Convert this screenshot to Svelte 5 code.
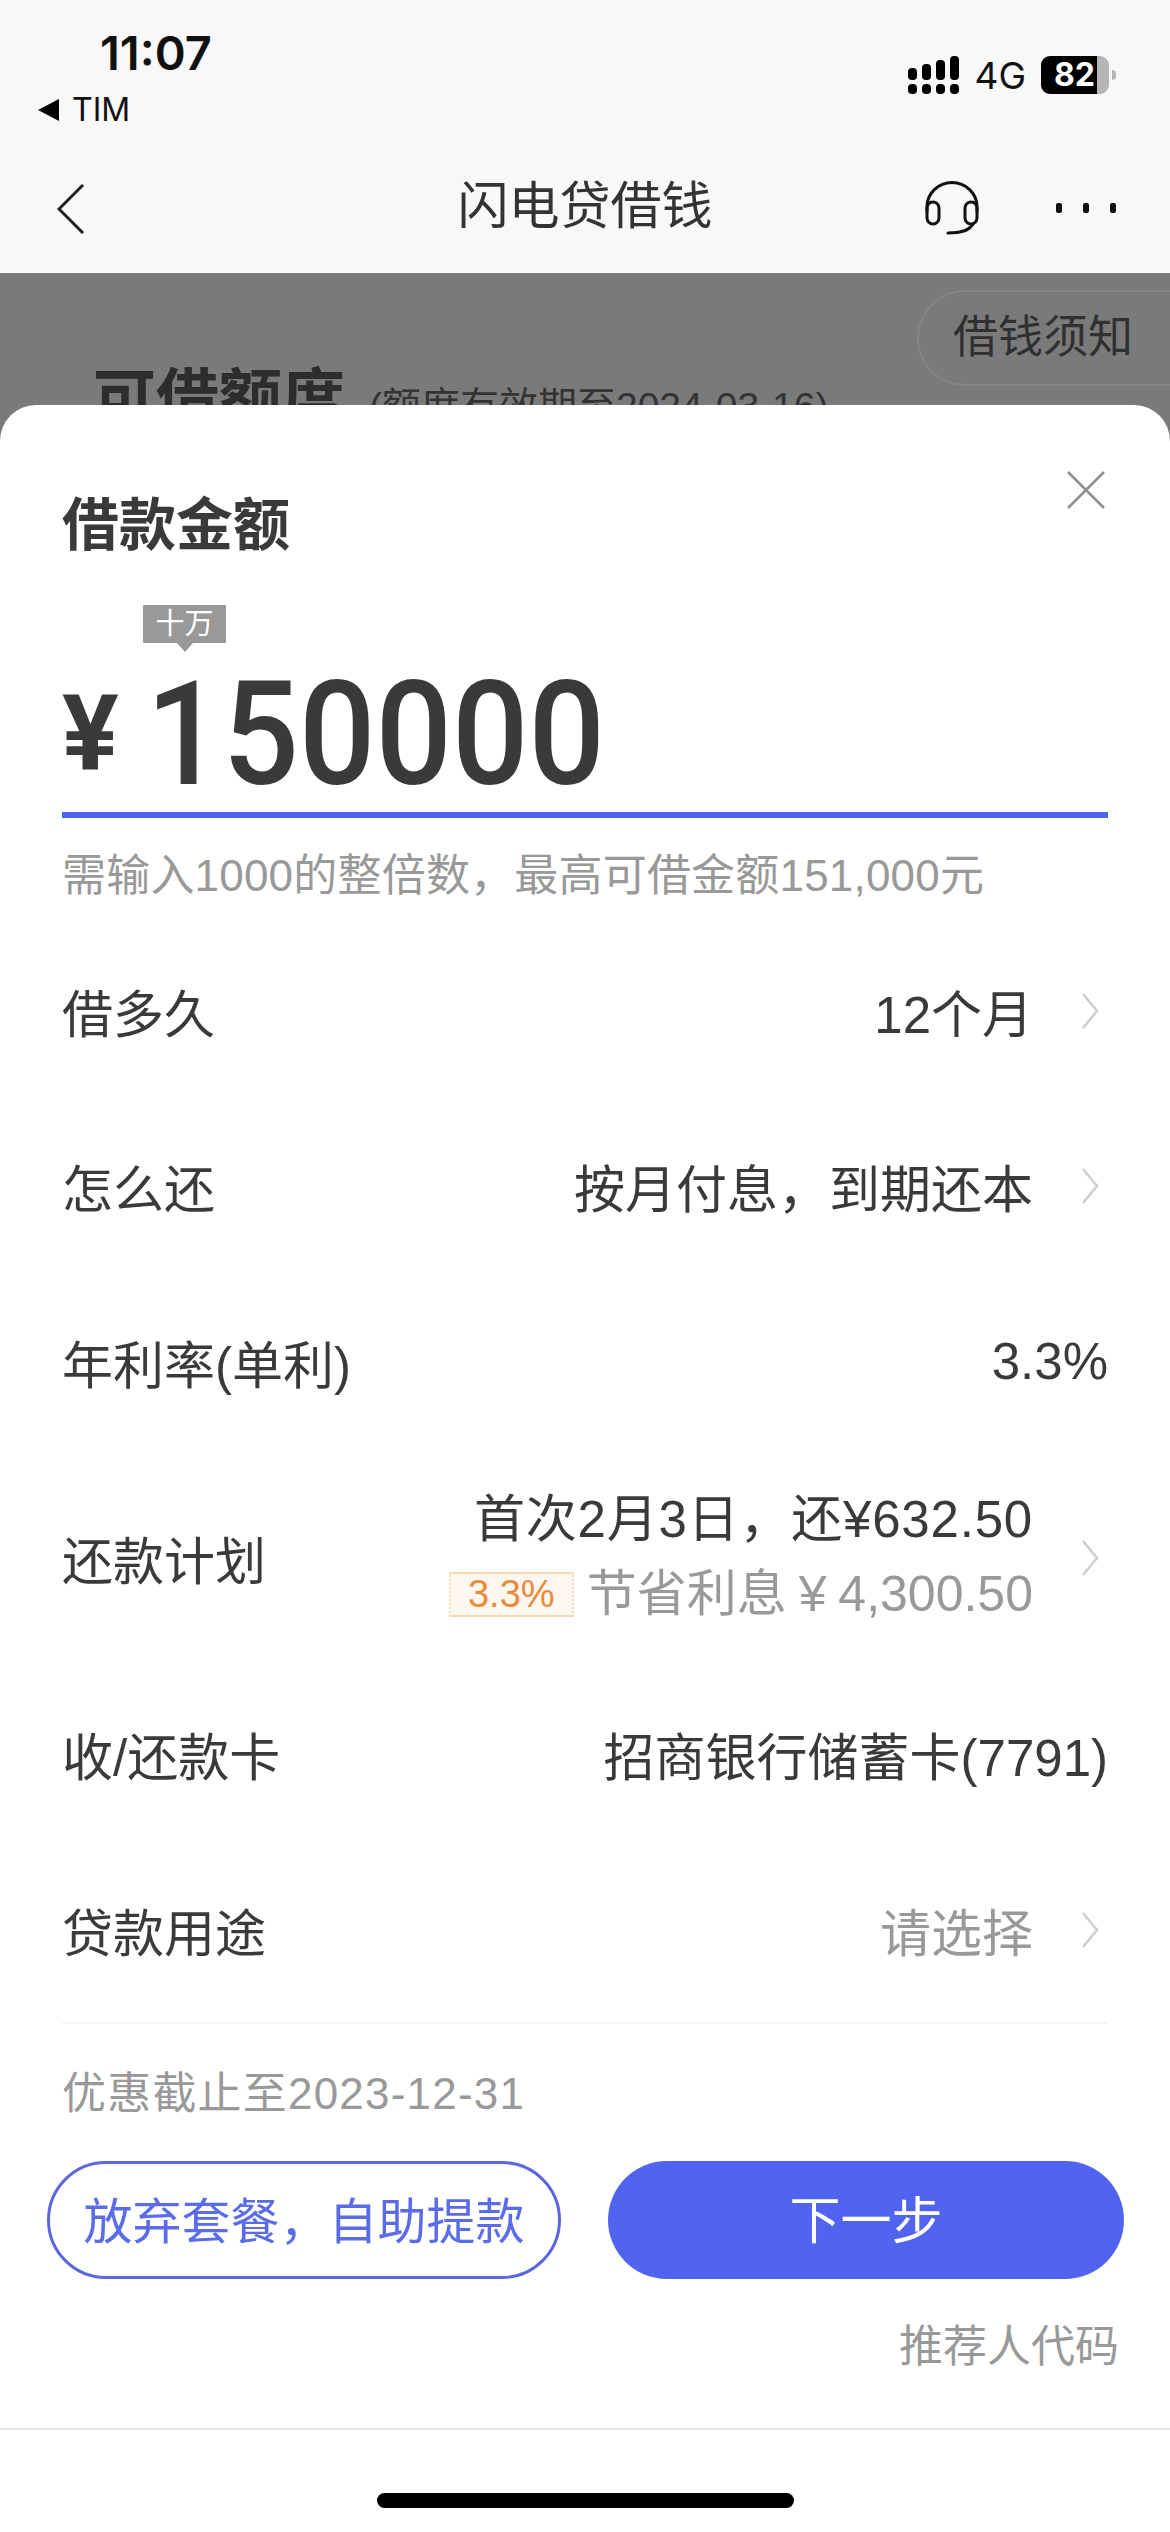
<script>
  const rows = [
    { label: '借多久', value: '12个月', arrow: true },
    { label: '怎么还', value: '按月付息，到期还本', arrow: true },
    { label: '年利率(单利)', value: '3.3%', arrow: false }
  ];
  const rowsAfter = [
    { label: '收/还款卡', value: '招商银行储蓄卡(7791)', arrow: false },
    { label: '贷款用途', value: '请选择', arrow: true, muted: true }
  ];
</script>

{#snippet chevron()}
  <svg class="chev" viewBox="0 0 18 38" width="18" height="38" aria-hidden="true">
    <path d="M2 2 L16 19 L2 36" fill="none" stroke="#cfcfcf" stroke-width="2.6" />
  </svg>
{/snippet}

{#snippet row(r)}
  <div class="row">
    <span class="label">{r.label}</span>
    <span class="right" class:flush={!r.arrow}>
      <span class="value" class:muted={r.muted}>{r.value}</span>
      {#if r.arrow}{@render chevron()}{/if}
    </span>
  </div>
{/snippet}

<div class="page">
  <header class="top">
    <div class="status">
      <div class="status-left">
        <div class="time">11:07</div>
        <div class="back-app"><span class="tri"></span>TIM</div>
      </div>
      <div class="status-right">
        <svg width="52" height="38" viewBox="0 0 52 38" aria-hidden="true">
          <g fill="#000">
            <rect x="0" y="28" width="9" height="10" rx="4" />
            <rect x="14" y="28" width="9" height="10" rx="4" />
            <rect x="28" y="28" width="9" height="10" rx="4" />
            <rect x="42" y="28" width="9" height="10" rx="4" />
            <rect x="0" y="12" width="9" height="12" rx="4" />
            <rect x="14" y="8" width="9" height="16" rx="4" />
            <rect x="28" y="4" width="9" height="20" rx="4" />
            <rect x="42" y="0" width="9" height="24" rx="4" />
          </g>
        </svg>
        <span class="net">4G</span>
        <span class="battery"><span class="batt-fill">82</span></span>
        <span class="tip"></span>
      </div>
    </div>
    <nav class="nav">
      <svg class="back" width="28" height="50" viewBox="0 0 28 50" aria-hidden="true">
        <path d="M26 1 L2 25 L26 49" fill="none" stroke="#222" stroke-width="3" />
      </svg>
      <div class="nav-title">闪电贷借钱</div>
      <svg class="headset" width="54" height="54" viewBox="0 0 54 54" aria-hidden="true">
        <g fill="none" stroke="#111" stroke-width="3" stroke-linecap="round">
          <path d="M2 30 V26 A25 24.5 0 0 1 52 26 V30" />
          <rect x="2" y="21" width="12" height="22" rx="6" />
          <rect x="40" y="21" width="12" height="22" rx="6" />
          <path d="M48 43 C44 50 36 52 23 52" />
        </g>
      </svg>
      <div class="dots"><i></i><i></i><i></i></div>
    </nav>
  </header>

  <div class="backdrop">
    <div class="notice">借钱须知</div>
    <div class="quota">
      <span class="quota-title">可借额度</span>
      <span class="quota-sub">(额度有效期至2024-03-16)</span>
    </div>
  </div>

  <section class="sheet">
    <svg class="close" width="40" height="40" viewBox="0 0 40 40" aria-hidden="true">
      <path d="M2 2 L38 38 M38 2 L2 38" stroke="#8f8f8f" stroke-width="2.6" fill="none" />
    </svg>
    <h2 class="title">借款金额</h2>
    <div class="tooltip">十万</div>
    <div class="amount">
      <span class="yen">¥</span>
      <span class="num">150000</span>
    </div>
    <div class="hint">需输入1000的整倍数，最高可借金额151,000元</div>

    <div class="rows">
      {#each rows as r}{@render row(r)}{/each}
      <div class="row plan">
        <span class="label">还款计划</span>
        <span class="right">
          <span class="plan-lines">
            <span class="value first">首次2月3日，还¥632.50</span>
            <span class="save">
              <span class="tag">3.3%</span>
              <span class="save-text">节省利息 ¥ 4,300.50</span>
            </span>
          </span>
          {@render chevron()}
        </span>
      </div>
      {#each rowsAfter as r}{@render row(r)}{/each}
    </div>

    <div class="deadline">优惠截止至2023-12-31</div>
    <div class="actions">
      <button class="btn ghost">放弃套餐，自助提款</button>
      <button class="btn solid">下一步</button>
    </div>
    <div class="referrer">推荐人代码</div>
    <footer class="foot"><span class="home"></span></footer>
  </section>
</div>

<style>
  :global(body) { margin: 0; background: #fff; }
  .page {
    position: relative;
    width: 1170px;
    height: 2532px;
    overflow: hidden;
    display: flex;
    flex-direction: column;
    font-family: "Liberation Sans", "Noto Sans CJK SC", sans-serif;
    color: #3a3a3a;
  }
  .top { height: 273px; background: #f8f8f8; flex: none; }
  .status { height: 137px; display: flex; justify-content: space-between; padding: 0 55px 0 38px; box-sizing: border-box; }
  .status-left { display: flex; flex-direction: column; }
  .time { font: 600 47px/54px Inter, sans-serif; color: #111; margin: 26px 0 0 62px; }
  .back-app { display: flex; align-items: center; gap: 13px; font: 400 32px/36px Inter, sans-serif; color: #111; margin-top: 12px; }
  .tri { width: 0; height: 0; border: 11px solid transparent; border-left: 0; border-right: 21px solid #000; }
  .status-right { display: flex; align-items: flex-start; margin-top: 56px; position: relative; left: 1px; }
  .net { font: 400 37px/36px Inter, sans-serif; color: #111; margin: 2px 0 0 14px; }
  .battery { width: 68px; height: 38px; margin-left: 15px; border-radius: 9px; background: #b5b5b5; overflow: hidden; display: block; }
  .batt-fill { display: block; width: 56px; height: 38px; background: #000; color: #fff; font: 700 32px/38px Inter, sans-serif; text-align: right; box-sizing: border-box; padding-right: 2px; }
  .tip { width: 4px; height: 10px; margin: 14px 0 0 3px; background: #b5b5b5; border-radius: 0 4px 4px 0; }

  .nav { height: 136px; position: relative; display: flex; align-items: center; justify-content: center; }
  .back { position: absolute; left: 57px; top: 47px; }
  .nav-title { font-size: 51px; color: #333; line-height: 70px; margin-top: 4px; }
  .headset { position: absolute; left: 925px; top: 44px; }
  .dots { position: absolute; left: 1056px; top: 66px; display: flex; gap: 21px; }
  .dots i { width: 6px; height: 10px; background: #111; border-radius: 2px; display: block; }

  .backdrop { flex: 1; background: #7a7a7b; position: relative; padding: 0 0 0 93px; }
  .notice {
    position: absolute; left: 917px; top: 17px; width: 300px; height: 96px; box-sizing: border-box;
    border: 2px solid #858586; border-radius: 48px; padding-left: 34px;
    font-size: 45px; line-height: 92px; color: #303031;
  }
  .quota { padding-top: 83px; display: flex; align-items: baseline; gap: 24px; }
  .quota-title { font-size: 63px; line-height: 84px; font-weight: 700; color: #2d2d2e; }
  .quota-sub { font-size: 39px; color: #333; }

  .sheet {
    position: absolute; left: 0; right: 0; top: 405px; bottom: 0;
    background: #fff; border-radius: 36px 36px 0 0;
    padding: 0 62px; display: flex; flex-direction: column;
  }
  .close { position: absolute; right: 64px; top: 65px; }
  .title { margin: 80px 0 0; font-size: 57px; line-height: 80px; font-weight: 700; color: #3a3a3a; }
  .tooltip {
    position: relative; margin: 40px 0 0 81px; width: 83px; height: 38px;
    background: #999; color: #fff; font-size: 29px; line-height: 38px; text-align: center;
  }
  .tooltip::after {
    content: ""; position: absolute; left: 34px; top: 38px;
    border: 8px solid transparent; border-top: 9px solid #999; border-bottom: 0;
  }
  .amount {
    height: 175px; box-sizing: border-box; border-bottom: 6px solid #5064f0;
    display: flex; align-items: flex-start; padding-top: 24px; color: #3a3a3a;
  }
  .yen { font: 700 106px/110px Roboto, sans-serif; margin-top: 12px; }
  .num {
    font: 500 144px/120px Roboto, sans-serif; margin: 8px 0 0 27px;
    transform: scaleX(0.935); transform-origin: left center;
  }
  .hint { margin-top: 33px; font-size: 44px; line-height: 50px; color: #999; letter-spacing: 0.2px; }

  .rows { margin-top: 22px; display: flex; flex-direction: column; }
  .row { height: 175.5px; display: flex; align-items: center; justify-content: space-between; font-size: 51px; flex: none; }
  .row.plan { height: 217px; }
  .label { color: #3a3a3a; }
  .right { display: flex; align-items: center; gap: 48px; margin-right: 9px; }
  .right.flush { margin-right: 0; }
  .value { color: #3a3a3a; white-space: nowrap; }
  .value.muted { color: #999; }
  .value.first { letter-spacing: 0.8px; }
  .chev { display: block; flex: none; }
  .plan-lines { display: flex; flex-direction: column; align-items: flex-end; gap: 14px; line-height: 60px; margin-top: -2px; }
  .save { display: flex; align-items: center; gap: 13px; }
  .tag {
    width: 125px; height: 45px; box-sizing: border-box; display: block;
    background: #fdf7f0; border-top: 2px solid #f6d9b5; border-bottom: 2px solid #f6d9b5;
    border-left: 2px dotted #f6d9b5; border-right: 2px dotted #f6d9b5;
    color: #ec8a3a; font-size: 38px; line-height: 41px; text-align: center;
  }
  .save-text { color: #999; font-size: 50px; white-space: nowrap; word-spacing: -2px; }

  .deadline { margin-top: 4px; border-top: 2px solid #f6f6f6; padding-top: 45px; font-size: 44px; line-height: 50px; color: #999; letter-spacing: 1.2px; }
  .actions { display: flex; gap: 47px; margin: 42px -15px 0 -15px; }
  .btn { flex: none; height: 118px; border-radius: 59px; font-family: inherit; box-sizing: border-box; padding: 0; }
  .ghost { width: 514px; background: #fff; border: 3px solid #5a68dc; color: #5a6ce8; font-size: 49px; padding-bottom: 4px; }
  .solid { width: 516px; background: #5064f0; border: 0; color: #fff; font-size: 51px; padding-bottom: 6px; }
  .referrer { margin-top: 43px; text-align: right; font-size: 44px; line-height: 50px; color: #999; margin-right: -11px; }
  .foot {
    position: absolute; left: 0; right: 0; bottom: 0; height: 104px;
    border-top: 2px solid #e6e6e6; box-sizing: border-box;
    display: flex; justify-content: center;
  }
  .home { width: 417px; height: 15px; margin-top: 63px; background: #000; border-radius: 8px; }
</style>
